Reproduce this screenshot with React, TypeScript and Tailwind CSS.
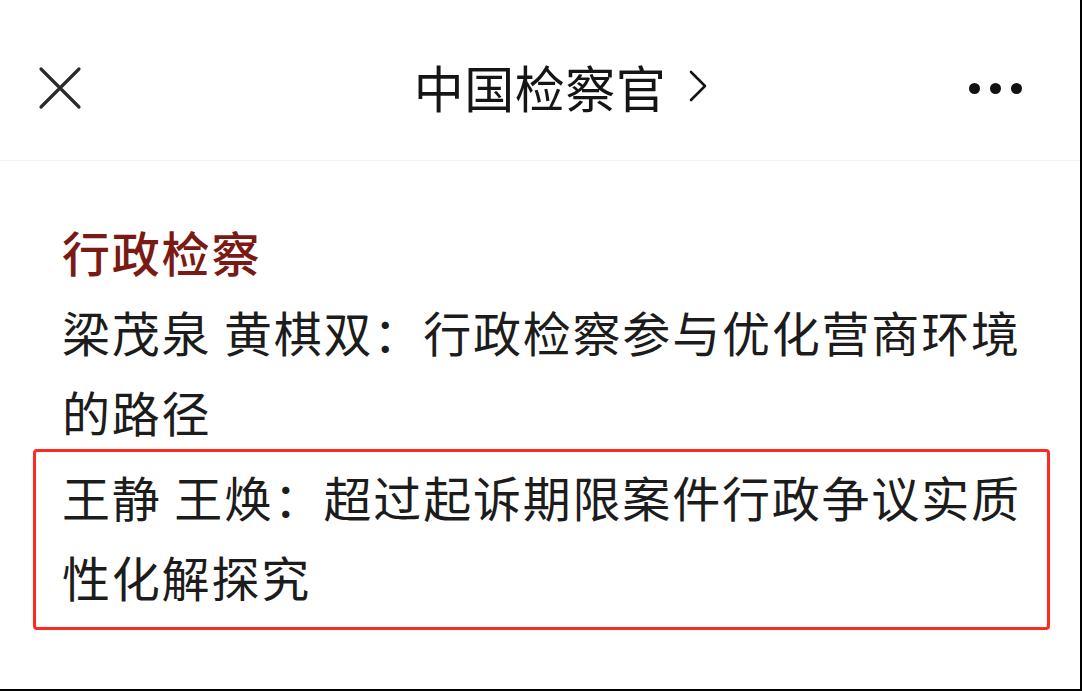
import React from 'react';

const cjk = { fontFamily: '"Noto Sans CJK SC", "Noto Sans", sans-serif' };

// article reference card in a mini-program style webview
const Header: React.FC = () => (
  <div className="relative flex h-[161px] items-center justify-center border-b border-[#f2f2f2] pt-[12px]">
    <button className="absolute left-[38px] top-[66px] flex h-[44px] w-[44px] items-center justify-center">
      <svg width="44" height="44" viewBox="0 0 44 44" fill="none">
        <path d="M3 3 L41 41 M41 3 L3 41" stroke="#2b2b2b" strokeWidth="3.2" strokeLinecap="round" />
      </svg>
    </button>

    <span className="relative text-[50px] leading-none tracking-[0.5px] text-[#151515]" style={cjk}>
      中国检察官
      <svg
        className="absolute left-[calc(100%+22px)] top-1/2 -translate-y-1/2"
        width="20"
        height="32"
        viewBox="0 0 20 32"
        fill="none"
      >
        <path d="M3 2 L17 16 L3 30" stroke="#151515" strokeWidth="2.6" strokeLinecap="round" strokeLinejoin="round" />
      </svg>
    </span>

    <div className="absolute right-[58px] top-[83px] flex gap-[10px]">
      <span className="h-[11px] w-[11px] rounded-full bg-[#111]" />
      <span className="h-[11px] w-[11px] rounded-full bg-[#111]" />
      <span className="h-[11px] w-[11px] rounded-full bg-[#111]" />
    </div>
  </div>
);

const App: React.FC = () => {
  return (
    <div className="h-[691px] w-[1082px] overflow-hidden border-b-2 border-r-2 border-black bg-white" style={cjk}>
      <Header />

      <div className="pt-[50px]">
        <h2 className="pl-[62px] text-[48px] font-medium leading-[80px] tracking-[1.8px] text-[#7a1a14]">
          行政检察
        </h2>
        <p className="pl-[62px] pr-[40px] text-[48px] leading-[80px] tracking-[1.8px] text-[#1c1c1c]">
          梁茂泉 黄棋双：行政检察参与优化营商环境的路径
        </p>

        <div className="ml-[33px] mt-[-2px] w-[1017px] rounded-[4px] border-[3px] border-[#ff2a1f] pb-[11px] pl-[26px] pr-[20px] pt-[4px]">
          <p className="text-[48px] leading-[80px] tracking-[1.8px] text-[#1c1c1c]">
            王静 王焕：超过起诉期限案件行政争议实质性化解探究
          </p>
        </div>
      </div>
    </div>
  );
};

export default App;
